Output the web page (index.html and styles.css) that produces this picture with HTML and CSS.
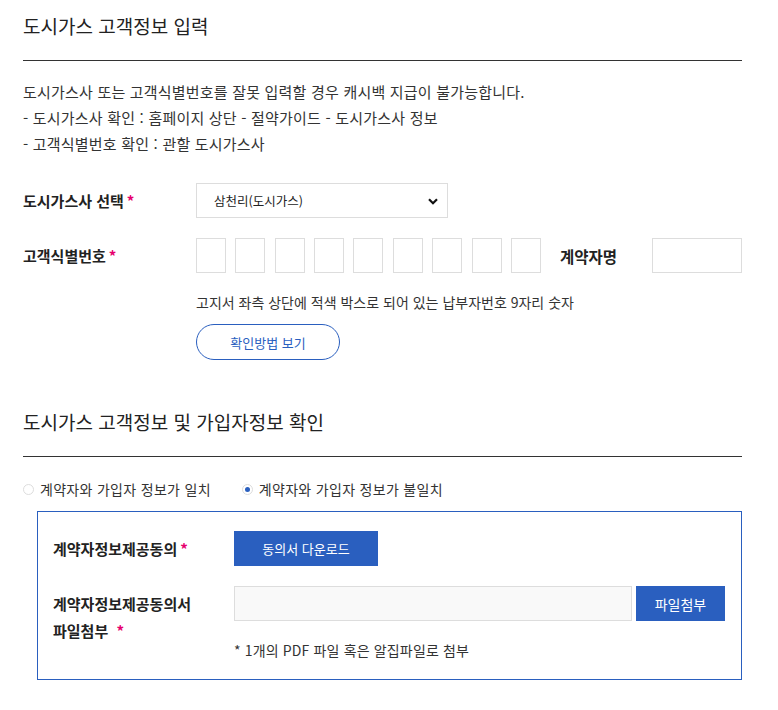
FILE: index.html
```html
<!DOCTYPE html>
<html lang="ko">
<head>
<meta charset="utf-8">
<title>도시가스 고객정보 입력</title>
<link rel="stylesheet" href="styles.css">
</head>
<body>
<div class="page">
  <h2 class="section-title">도시가스 고객정보 입력</h2>
  <div class="desc">
    <p>도시가스사 또는 고객식별번호를 잘못 입력할 경우 캐시백 지급이 불가능합니다.</p>
    <p>- 도시가스사 확인 : 홈페이지 상단 - 절약가이드 - 도시가스사 정보</p>
    <p>- 고객식별번호 확인 : 관할 도시가스사</p>
  </div>

  <div class="form">
    <div class="row">
      <div class="label">도시가스사 선택<span class="req">*</span></div>
      <div class="select-wrap">
        <select class="select"><option>삼천리(도시가스)</option></select>
        <svg class="chev" width="10" height="7" viewBox="0 0 10 7"><path d="M1 1.2 L5 5.2 L9 1.2" fill="none" stroke="#111" stroke-width="2.2"/></svg>
      </div>
    </div>
    <div class="row">
      <div class="label">고객식별번호<span class="req">*</span></div>
      <div class="digits">
        <input class="digit" type="text"><input class="digit" type="text"><input class="digit" type="text"><input class="digit" type="text"><input class="digit" type="text"><input class="digit" type="text"><input class="digit" type="text"><input class="digit" type="text"><input class="digit" type="text">
      </div>
      <div class="label-inline">계약자명</div>
      <input class="name-input" type="text">
    </div>
    <div class="hint-block">
      <p class="hint">고지서 좌측 상단에 적색 박스로 되어 있는 납부자번호 9자리 숫자</p>
      <button class="pill-btn" type="button">확인방법 보기</button>
    </div>
  </div>

  <h2 class="section-title second">도시가스 고객정보 및 가입자정보 확인</h2>
  <div class="radios">
    <label class="radio"><span class="dot"></span>계약자와 가입자 정보가 일치</label>
    <label class="radio checked"><span class="dot"></span>계약자와 가입자 정보가 불일치</label>
  </div>

  <div class="box">
    <div class="box-row center">
      <div class="box-label">계약자정보제공동의<span class="req">*</span></div>
      <button class="blue-btn wide" type="button">동의서 다운로드</button>
    </div>
    <div class="box-row top">
      <div class="box-label">계약자정보제공동의서<br>파일첨부 <span class="req sp">*</span></div>
      <div class="file-col">
        <div class="file-line">
          <input class="file-input" type="text">
          <button class="blue-btn attach" type="button">파일첨부</button>
        </div>
        <p class="note">* 1개의 PDF 파일 혹은 알집파일로 첨부</p>
      </div>
    </div>
  </div>
</div>
</body>
</html>
```

FILE: styles.css
```css
* { box-sizing: border-box; }
body {
  margin: 0;
  background: #fff;
  font-family: "Noto Sans CJK KR", "Noto Sans", sans-serif;
  color: #333;
}
p { margin: 0; }
.page {
  width: 742px;
  padding-left: 23px;
}
.section-title {
  margin: 0;
  font-size: 19px;
  font-weight: 400;
  line-height: 26px;
  color: #222;
  padding: 13px 0 21px;
  border-bottom: 1px solid #333;
}
.section-title.second { margin-top: 36px; }
.desc {
  margin-top: 18px;
  font-size: 15px;
  letter-spacing: 0.2px;
  line-height: 26px;
  color: #333;
}
.form { margin-top: 26px; }
.row {
  display: flex;
  align-items: center;
  margin-bottom: 20px;
}
.label {
  width: 173px;
  font-size: 15px;
  font-weight: 700;
  color: #222;
}
.req {
  color: #e6006e;
  margin-left: 3px;
}
.req.sp { margin-left: 4px; }
.select-wrap {
  position: relative;
  width: 252px;
  height: 35px;
}
.select {
  appearance: none;
  -webkit-appearance: none;
  width: 100%;
  height: 100%;
  border: 1px solid #ddd;
  background: #fff;
  font-family: inherit;
  font-size: 12.5px;
  color: #222;
  padding: 0 0 0 17px;
  border-radius: 0;
}
.chev {
  position: absolute;
  right: 10px;
  top: 15px;
}
.digits {
  display: flex;
  gap: 9.4px;
}
.digit {
  width: 30px;
  height: 35px;
  border: 1px solid #ddd;
  padding: 0;
  font-family: inherit;
}
.label-inline {
  width: 111px;
  padding-left: 19px;
  font-size: 15.5px;
  font-weight: 700;
  color: #222;
}
.name-input {
  width: 90px;
  height: 35px;
  border: 1px solid #ddd;
  padding: 0;
}
.hint-block {
  padding-left: 173px;
  margin-top: -1px;
}
.hint {
  font-size: 14px;
  line-height: 20px;
}
.pill-btn {
  margin-top: 12px;
  width: 144px;
  height: 36px;
  border: 1px solid #2a5fbf;
  border-radius: 18px;
  background: #fff;
  color: #2a5fbf;
  font-family: inherit;
  font-size: 13px;
}
.radios {
  display: flex;
  gap: 31px;
  margin-top: 22px;
  font-size: 14px;
  letter-spacing: 0.3px;
  line-height: 20px;
}
.radio {
  display: flex;
  align-items: center;
  gap: 6px;
}
.dot {
  width: 11px;
  height: 11px;
  border: 1px solid #ddd;
  border-radius: 50%;
  display: flex;
  align-items: center;
  justify-content: center;
}
.radio.checked .dot::after {
  content: "";
  width: 5px;
  height: 5px;
  border-radius: 50%;
  background: #2a5fbf;
}
.box {
  margin: 12px 0 0 14px;
  width: 705px;
  border: 1px solid #2a5fbf;
  padding: 19px 16px 19px 15px;
}
.box-row {
  display: flex;
}
.box-row.center { align-items: center; }
.box-row.top { margin-top: 20px; }
.box-label {
  width: 181px;
  font-size: 15px;
  font-weight: 700;
  color: #222;
  line-height: 27px;
}
.box-row.top .box-label { padding-top: 4px; }
.blue-btn {
  height: 35px;
  border: 0;
  background: #2a5fbf;
  color: #fff;
  font-family: inherit;
  font-size: 13px;
}
.blue-btn.wide { width: 144px; }
.file-col { flex: 1; }
.file-line {
  display: flex;
  gap: 4px;
}
.file-input {
  flex: 1;
  height: 35px;
  border: 1px solid #ddd;
  background: #f9f9f9;
  padding: 0;
}
.blue-btn.attach {
  width: 89px;
  font-size: 14px;
}
.note {
  margin-top: 19px;
  font-size: 14px;
  letter-spacing: 0.15px;
  line-height: 20px;
}
```
